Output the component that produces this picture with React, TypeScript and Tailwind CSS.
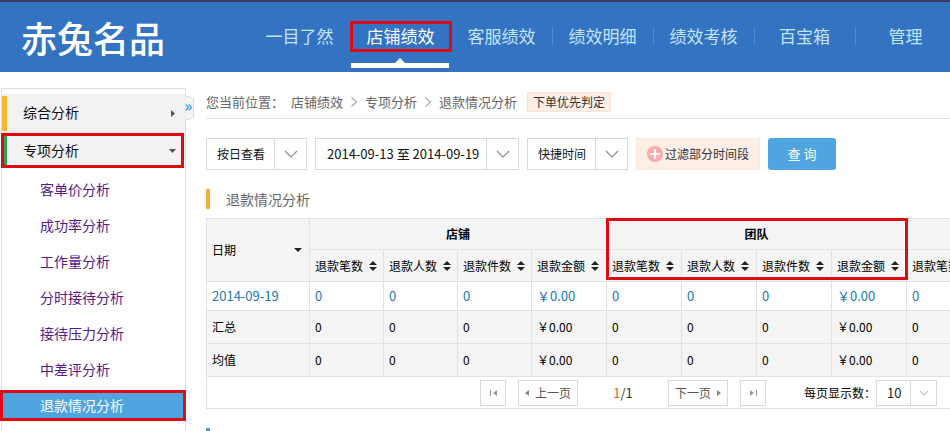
import { useState } from 'react';
import clsx from 'clsx';

const navItems = ['一目了然', '店铺绩效', '客服绩效', '绩效明细', '绩效考核', '百宝箱', '管理'];

const subItems = [
  '客单价分析',
  '成功率分析',
  '工作量分析',
  '分时接待分析',
  '接待压力分析',
  '中差评分析',
  '退款情况分析',
];

const metrics = ['退款笔数', '退款人数', '退款件数', '退款金额'];
const columns = [...metrics, ...metrics, '退款笔数'];

const rows = [
  { label: '2014-09-19', link: true },
  { label: '汇总', link: false },
  { label: '均值', link: false },
];

function Chevron({ className }: { className?: string }) {
  return (
    <svg viewBox="0 0 14 8" fill="none" stroke="#8a8a8a" strokeWidth="1.1" className={className}>
      <path d="M1 1l6 6 6-6" />
    </svg>
  );
}

function SortIcon() {
  return (
    <svg viewBox="0 0 8 10" className="h-[10px] w-2 shrink-0" fill="#222">
      <path d="M4 0l4 4H0zM0 6h8l-4 4z" />
    </svg>
  );
}

function SelectBox({ label, text }: { label: string; text: string }) {
  return (
    <div className="relative h-8 w-[101px] border border-[#d9d9d9]">
      <select aria-label={label} className="h-full w-full appearance-none bg-white pl-[10px] text-xs text-[#111] outline-none">
        <option>{text}</option>
      </select>
      <div className="pointer-events-none absolute inset-y-0 right-0 flex w-8 items-center justify-center border-l border-[#d9d9d9]">
        <Chevron className="h-2 w-[14px]" />
      </div>
    </div>
  );
}

function Header() {
  return (
    <header className="flex h-[72px] shrink-0 items-stretch overflow-hidden border-t-2 border-[#3a3c62] bg-[#3473c2]">
      <div className="flex w-[249px] shrink-0 items-center pl-[21px] text-4xl font-medium text-white">赤兔名品</div>
      <nav className="flex pb-0.5">
        {navItems.map((item, i) => {
          const active = item === '店铺绩效';
          return (
            <a
              key={item}
              href="#"
              className={clsx(
                'relative flex w-[101px] shrink-0 items-center justify-center text-[17px]',
                active ? 'text-white' : 'text-[#c3e3fb]'
              )}
            >
              {item}
              {i > 1 && i < navItems.length - 1 && (
                <span className="absolute top-[25px] -right-px h-[18px] w-px bg-[#4a8ad4]" />
              )}
              {active && (
                <>
                  <span className="absolute top-[19px] left-0 h-[31px] w-[102px] border-3 border-[#e00b12]" />
                  <span className="absolute top-[61px] left-px h-[5px] w-[98px] bg-white" />
                  <svg viewBox="0 0 10 5" className="absolute top-14 left-[45px] h-[5px] w-[10px]" fill="#fff">
                    <path d="M5 0l5 5H0z" />
                  </svg>
                </>
              )}
            </a>
          );
        })}
      </nav>
    </header>
  );
}

function Sidebar() {
  const [current, setCurrent] = useState('退款情况分析');

  return (
    <aside className="relative mt-4 ml-px w-[185px] shrink-0 border border-b-0 border-[#ddd] pt-[5px]">
      <button className="flex h-[39px] w-full items-center justify-between border-b border-[#e6e6e6] bg-[#f2f2f2] pr-[10px] text-sm text-[#111]">
        <span className="h-[35px] w-[5px] bg-[#f7b733]" />
        <span className="grow pb-0.5 pl-4 text-left">综合分析</span>
        <svg viewBox="0 0 4 7" className="h-[7px] w-1" fill="#555">
          <path d="M0 0l4 3.5L0 7z" />
        </svg>
      </button>
      <button className="-ml-px flex h-[35px] w-[183px] items-center justify-between border-3 border-[#e00b12] bg-[#f2f2f2] pr-[5px] text-sm text-[#111]">
        <span className="h-full w-[3px] bg-[#22a84a]" />
        <span className="grow pb-0.5 pl-4 text-left">专项分析</span>
        <svg viewBox="0 0 7 4" className="h-1 w-[7px]" fill="#555">
          <path d="M0 0h7L3.500 4z" />
        </svg>
      </button>
      <ul className="pt-[3px]">
        {subItems.map((item) => (
          <li key={item} className="flex h-9 items-center">
            <a
              href="#"
              onClick={() => setCurrent(item)}
              className={clsx(
                '-mr-px -ml-0.5 flex h-[31px] grow items-center text-sm',
                item === current
                  ? 'border-3 border-[#e00b12] bg-[#50a5e0] pl-[37px] text-white'
                  : 'pl-10 text-[#551a8b]'
              )}
            >
              {item}
            </a>
          </li>
        ))}
      </ul>
      {/* collapse handle */}
      <button aria-label="收起" className="absolute top-[6px] -right-[9px] h-[26px] w-[9px]">
        <svg viewBox="0 0 9 26" className="h-[26px] w-[9px]" fill="none">
          <path d="M0 .5l8.500 3v19l-8.500 3z" fill="#f2f5f8" stroke="#ddd" />
          <path d="M1 9.500l2.500 3-2.500 3M4 9.500l2.500 3-2.500 3" stroke="#3d9be0" strokeWidth="1.200" />
        </svg>
      </button>
    </aside>
  );
}

function Breadcrumb() {
  return (
    <div className="flex h-[31px] items-center border-b border-[#e3e3e3] pb-0.5 text-[13px] text-[#666]">
      <span className="w-[85px]">您当前位置：</span>
      {['店铺绩效', '专项分析', '退款情况分析'].map((crumb, i) => (
        <span key={crumb} className="flex items-center">
          {i > 0 && (
            <svg viewBox="0 0 6 10" className="mx-2 h-[10px] w-[6px]" fill="none" stroke="#777">
              <path d="M.5.5L5.500 5 .5 9.500" />
            </svg>
          )}
          {crumb}
        </span>
      ))}
      <span className="ml-[10px] flex h-5 items-center border border-[#fbe3d6] bg-[#fdeee6] px-[5px] text-xs text-[#333]">
        下单优先判定
      </span>
    </div>
  );
}

function Filters() {
  return (
    <div className="mt-[19px] flex gap-2">
      <SelectBox label="查看方式" text="按日查看" />
      <div className="flex h-8 w-[204px] border border-[#d9d9d9]">
        <input
          aria-label="日期"
          readOnly
          value="2014-09-13 至 2014-09-19"
          className="min-w-0 grow pl-[11px] text-[13px] text-[#111] outline-none"
        />
        <button aria-label="选择日期" className="flex w-8 shrink-0 items-center justify-center border-l border-[#d9d9d9]">
          <Chevron className="h-2 w-[14px]" />
        </button>
      </div>
      <SelectBox label="快捷时间" text="快捷时间" />
      <button className="flex h-8 w-[124px] items-center justify-center gap-0.5 border border-[#fbe6dc] bg-[#fdeee6] text-xs text-[#333]">
        <svg viewBox="0 0 16 16" className="h-4 w-4">
          <circle cx="8" cy="8" r="8" fill="#fba9ab" />
          <path d="M8 3v10M3 8h10" stroke="#fff" strokeWidth="2.200" />
        </svg>
        过滤部分时间段
      </button>
      <button className="h-8 w-[68px] rounded-[3px] bg-[#50a5e0] text-[13px] text-white">查 询</button>
    </div>
  );
}

function ReportTable() {
  return (
    <table className="mt-[9px] w-[775px] table-fixed border-collapse text-left text-xs text-black">
      <colgroup>
        <col className="w-[103px]" />
        {columns.map((_, i) => (
          <col key={i} className={i < 3 ? 'w-[74px]' : 'w-[75px]'} />
        ))}
      </colgroup>
      <thead className="bg-[#f4f4f4]">
        <tr className="h-[31px]">
          <th rowSpan={2} className="border border-[#e2e2e2] px-[5px] font-normal">
            <div className="flex items-center justify-between pr-0.5">
              日期
              <svg viewBox="0 0 8 4" className="h-1 w-2" fill="#222">
                <path d="M0 0h8L4 4z" />
              </svg>
            </div>
          </th>
          <th colSpan={4} className="border border-[#e2e2e2] text-center font-bold">店铺</th>
          <th colSpan={4} className="relative border border-[#e2e2e2] text-center font-bold">
            团队
            <span className="pointer-events-none absolute -top-px -left-px h-[62px] w-[302px] border-3 border-[#e00b12]" />
          </th>
          <th className="border border-[#e2e2e2]" />
        </tr>
        <tr className="h-8">
          {columns.map((name, i) => (
            <th key={i} className="border border-[#e2e2e2] pl-[5px] font-normal whitespace-nowrap">
              <div className="flex items-center gap-[6px]">
                {name}
                <SortIcon />
              </div>
            </th>
          ))}
        </tr>
      </thead>
      <tbody>
        {rows.map((row) => (
          <tr key={row.label} className={row.link ? 'h-[29px] text-[13px] text-[#2079b5]' : 'h-[33px] bg-[#f4f4f4]'}>
            <td className="border border-[#e2e2e2] pl-[5px]">
              {row.link ? <a href="#">{row.label}</a> : row.label}
            </td>
            {columns.map((name, i) => (
              <td key={i} className="border border-[#e2e2e2] pl-[5px]">
                {name === '退款金额' ? '￥0.00' : '0'}
              </td>
            ))}
          </tr>
        ))}
      </tbody>
    </table>
  );
}

function Pager() {
  const btn = 'flex h-[26px] items-center justify-center border border-[#d9d9d9] text-[#555]';

  return (
    <div className="flex h-8 w-[775px] items-center border-b border-l border-[#e2e2e2] pl-[273px] text-xs">
      <button aria-label="首页" className={clsx(btn, 'w-[26px]')}>
        <svg viewBox="0 0 7 6" className="h-[6px] w-[7px]" fill="#999">
          <path d="M0 0h1v6H0zM7 0v6L3 3z" />
        </svg>
      </button>
      <button className={clsx(btn, 'ml-3 w-[60px] gap-[6px]')}>
        <svg viewBox="0 0 4 6" className="h-[6px] w-1" fill="#888">
          <path d="M4 0v6L0 3z" />
        </svg>
        上一页
      </button>
      <span className="w-[90px] text-center text-[13px] text-[#333]">
        <span className="text-[#f0562d]">1</span>/1
      </span>
      <button className={clsx(btn, 'w-[60px] gap-[6px]')}>
        下一页
        <svg viewBox="0 0 4 6" className="h-[6px] w-1" fill="#888">
          <path d="M0 0v6l4-3z" />
        </svg>
      </button>
      <button aria-label="末页" className={clsx(btn, 'ml-3 w-[26px]')}>
        <svg viewBox="0 0 7 6" className="h-[6px] w-[7px]" fill="#999">
          <path d="M6 0h1v6H6zM0 0v6l4-3z" />
        </svg>
      </button>
      <label htmlFor="page-size" className="ml-[38px] w-[72px] text-black">每页显示数：</label>
      <div className="relative h-[26px] w-[61px] border border-[#d9d9d9]">
        <select id="page-size" className="h-full w-full appearance-none bg-white pl-[10px] text-[13px] text-[#222] outline-none">
          <option>10</option>
        </select>
        <div className="pointer-events-none absolute inset-y-0 right-0 flex w-[26px] items-center justify-center border-l border-[#d9d9d9]">
          <Chevron className="h-[6px] w-[10px]" />
        </div>
      </div>
    </div>
  );
}

export default function App() {
  return (
    <div className="flex h-screen flex-col overflow-hidden bg-white font-['Noto_Sans_CJK_SC',sans-serif]">
      <Header />
      <div className="flex min-h-0 grow">
        <Sidebar />
        <main className="ml-5 min-w-0 grow overflow-hidden pt-4">
          <Breadcrumb />
          <Filters />
          <h2 className="mt-[19px] flex h-5 items-center border-l-4 border-[#f5ae3c] pl-4 text-sm text-[#666]">
            退款情况分析
          </h2>
          <ReportTable />
          <Pager />
          <div className="mt-[19px] h-5 w-1 bg-[#4a9bd6]" />
        </main>
      </div>
    </div>
  );
}
